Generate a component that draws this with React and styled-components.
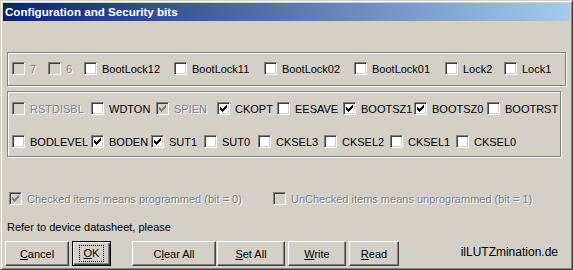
import React from 'react'
import styled, { createGlobalStyle } from 'styled-components'

const GlobalStyle = createGlobalStyle`
  html, body {
    margin: 0;
    padding: 0;
    background: #d4d0c8;
  }
  body {
    font-family: "Liberation Sans", Arial, sans-serif;
    font-size: 11px;
  }
`

const Window = styled.div`
  width: 573px;
  height: 270px;
  box-sizing: border-box;
  background: #d4d0c8;
  border: 1px solid;
  border-color: #d4d0c8 #404040 #404040 #d4d0c8;
  box-shadow: inset 1px 1px #fff, inset -1px -1px #808080;
  padding: 2px;
  display: flex;
  flex-direction: column;
`

const TitleBar = styled.div`
  height: 18px;
  background: linear-gradient(to right, #0a246a, #a6caf0);
  color: #fff;
  font-weight: bold;
  font-size: 11.6px;
  line-height: 18px;
  padding-left: 2px;
  white-space: nowrap;
`

const Body = styled.div`
  display: flex;
  flex-direction: column;
  flex: 1;
`

const Group = styled.div`
  margin-left: 4px;
  margin-top: ${p => p.top}px;
  width: ${p => p.width}px;
  height: ${p => p.height}px;
  box-sizing: border-box;
  border: 1px solid #808080;
  box-shadow: inset 1px 1px #fff, 1px 1px #fff;
  padding: ${p => p.padTop}px 0 0 4px;
  display: flex;
  flex-direction: column;
  gap: 20px;
`

const Row = styled.div`
  display: flex;
  align-items: center;
  height: 13px;
`

const Item = styled.label`
  display: flex;
  align-items: center;
  flex: none;
  width: ${p => (p.w ? `${p.w}px` : 'auto')};
  white-space: nowrap;
`

const Box = styled.span`
  width: 13px;
  height: 13px;
  box-sizing: border-box;
  flex: none;
  border: 1px solid;
  border-color: #808080 #fff #fff #808080;
  box-shadow: inset 1px 1px #404040, inset -1px -1px #d4d0c8;
  background: ${p => (p.disabled ? '#d4d0c8' : '#fff')};
  display: flex;
  align-items: center;
  justify-content: center;
`

const Label = styled.span`
  margin-left: 5px;
  padding-top: 1px;
  color: ${p => (p.disabled ? '#808080' : '#000')};
  text-shadow: ${p => (p.disabled ? '1px 1px #fff' : 'none')};
`

const Check = ({ color }) => (
  <svg width="7" height="7" viewBox="0 0 7 7" shapeRendering="crispEdges">
    {[2, 3, 4, 3, 2, 1, 0].map((y, x) => (
      <rect key={x} x={x} y={y} width="1" height="3" fill={color} />
    ))}
  </svg>
)

const CheckItem = ({ label, checked, disabled, w }) => (
  <Item w={w}>
    <Box disabled={disabled}>
      {checked && <Check color={disabled ? '#808080' : '#000'} />}
    </Box>
    <Label disabled={disabled}>{label}</Label>
  </Item>
)

const NoteRow = styled(Row)`
  margin-top: 35px;
  padding-left: 6px;
`

const Hint = styled.div`
  margin-top: 16px;
  margin-left: 4px;
  line-height: 13px;
  height: 13px;
`

const ButtonBar = styled.div`
  margin-top: 7px;
  display: flex;
  align-items: center;
  padding-left: 2px;
`

const Button = styled.button`
  width: ${p => p.w}px;
  height: 25px;
  margin-left: ${p => p.gap || 0}px;
  box-sizing: border-box;
  font-family: "Liberation Sans", Arial, sans-serif;
  font-size: 11px;
  color: #000;
  background: #d4d0c8;
  border: 1px solid;
  border-color: #fff #404040 #404040 #fff;
  box-shadow: inset -1px -1px #808080;
  padding: 0;
  display: flex;
  align-items: center;
  justify-content: center;
  u {
    text-decoration: underline;
  }
`

const DefaultButton = styled(Button)`
  border: 1px solid #000;
  box-shadow: inset 1px 1px #fff, inset -1px -1px #404040, inset -2px -2px #808080;
`

const Focus = styled.span`
  border: 1px dotted #000;
  padding: 1px 4px;
  line-height: 13px;
`

const Brand = styled.div`
  margin-left: auto;
  margin-right: 12px;
  font-size: 12px;
  padding-bottom: 4px;
`

const row1 = [
  { label: '7', disabled: true, w: 36 },
  { label: '6', disabled: true, w: 36 },
  { label: 'BootLock12', w: 90 },
  { label: 'BootLock11', w: 90 },
  { label: 'BootLock02', w: 90 },
  { label: 'BootLock01', w: 91 },
  { label: 'Lock2', w: 59 },
  { label: 'Lock1' },
]

const row2 = [
  { label: 'RSTDISBL', disabled: true, w: 79 },
  { label: 'WDTON', w: 65 },
  { label: 'SPIEN', disabled: true, checked: true, w: 61 },
  { label: 'CKOPT', checked: true, w: 60 },
  { label: 'EESAVE', w: 66 },
  { label: 'BOOTSZ1', checked: true, w: 71 },
  { label: 'BOOTSZ0', checked: true, w: 73 },
  { label: 'BOOTRST' },
]

const row3 = [
  { label: 'BODLEVEL', w: 79 },
  { label: 'BODEN', checked: true, w: 60 },
  { label: 'SUT1', checked: true, w: 53 },
  { label: 'SUT0', w: 54 },
  { label: 'CKSEL3', w: 66 },
  { label: 'CKSEL2', w: 66 },
  { label: 'CKSEL1', w: 66 },
  { label: 'CKSEL0' },
]

const renderRow = items => (
  <Row>
    {items.map(it => (
      <CheckItem key={it.label} {...it} />
    ))}
  </Row>
)

export default function App() {
  return (
    <Window>
      <GlobalStyle />
      <TitleBar>Configuration and Security bits</TitleBar>
      <Body>
        <Group top={31} width={559} height={34} padTop={9}>
          {renderRow(row1)}
        </Group>
        <Group top={5} width={554} height={66} padTop={10}>
          {renderRow(row2)}
          {renderRow(row3)}
        </Group>
        <NoteRow>
          <CheckItem w={264} checked disabled label="Checked items means programmed (bit = 0)" />
          <CheckItem disabled label="UnChecked items means unprogrammed (bit = 1)" />
        </NoteRow>
        <Hint>Refer to device datasheet, please</Hint>
        <ButtonBar>
          <Button w={64}><span><u>C</u>ancel</span></Button>
          <DefaultButton w={39} gap={3}>
            <Focus><u>O</u>K</Focus>
          </DefaultButton>
          <Button w={84} gap={21}><span>C<u>l</u>ear All</span></Button>
          <Button w={68} gap={1}><span><u>S</u>et All</span></Button>
          <Button w={58} gap={3}><span><u>W</u>rite</span></Button>
          <Button w={50} gap={3}><span><u>R</u>ead</span></Button>
          <Brand>ilLUTZmination.de</Brand>
        </ButtonBar>
      </Body>
    </Window>
  )
}
